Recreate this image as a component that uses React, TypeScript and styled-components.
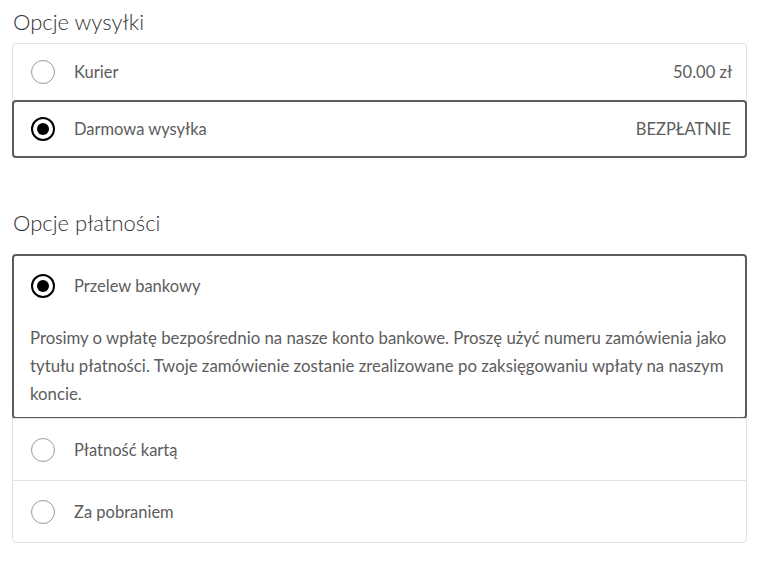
import React, { useState } from "react";
import styled, { createGlobalStyle } from "styled-components";

const GlobalStyle = createGlobalStyle`
  body {
    margin: 0;
    background: #fff;
    font-family: Lato, "Liberation Sans", sans-serif;
  }
`;

type Option = {
  id: string;
  label: string;
  price?: string;
  description?: string;
};

const shipping: Option[] = [
  { id: "kurier", label: "Kurier", price: "50.00 zł" },
  { id: "free", label: "Darmowa wysyłka", price: "BEZPŁATNIE" },
];

const payment: Option[] = [
  {
    id: "bank",
    label: "Przelew bankowy",
    description:
      "Prosimy o wpłatę bezpośrednio na nasze konto bankowe. Proszę użyć numeru zamówienia jako tytułu płatności. Twoje zamówienie zostanie zrealizowane po zaksięgowaniu wpłaty na naszym koncie.",
  },
  { id: "card", label: "Płatność kartą" },
  { id: "cod", label: "Za pobraniem" },
];

function OptionGroup({
  options,
  value,
  onChange, // id -> void
  rowHeight,
  selectedRowHeight,
}: {
  options: Option[];
  value: string;
  onChange: (id: string) => void;
  rowHeight: number;
  selectedRowHeight: number;
}) {
  return (
    <Box>
      {options.map((opt, index) => {
        const selected = opt.id === value;
        return (
          <Item key={opt.id} $selected={selected} $first={index === 0}>
            <Row
              $height={selected ? selectedRowHeight : rowHeight}
              onClick={() => onChange(opt.id)}
            >
              <Radio $checked={selected} />
              <Label>{opt.label}</Label>
              {opt.price && <Price>{opt.price}</Price>}
            </Row>
            {selected && opt.description && (
              <Description>{opt.description}</Description>
            )}
          </Item>
        );
      })}
    </Box>
  );
}

export default function App() {
  const [ship, setShip] = useState("free");
  const [pay, setPay] = useState("bank");

  return (
    <>
      <GlobalStyle />
      <Page>
        <Heading>Opcje wysyłki</Heading>
        <OptionGroup
          options={shipping}
          value={ship}
          onChange={setShip}
          rowHeight={56}
          selectedRowHeight={54}
        />
        <Heading $spaced>Opcje płatności</Heading>
        <OptionGroup
          options={payment}
          value={pay}
          onChange={setPay}
          rowHeight={61}
          selectedRowHeight={60}
        />
      </Page>
    </>
  );
}

const Page = styled.div`
  width: 735px;
  padding: 6px 0 0 12px;
`;

const Heading = styled.h2<{ $spaced?: boolean }>`
  margin: ${(p) => (p.$spaced ? "49px 0 15px 1px" : "0 0 5px 1px")};
  font-size: 22px;
  font-weight: 300;
  line-height: 32px;
  color: #333;
`;

const Box = styled.div`
  border: 1px solid #e2e2e2;
  border-radius: 4px;
`;

const Item = styled.div<{ $selected: boolean; $first: boolean }>`
  border-top: ${(p) => (p.$first ? "none" : "1px solid #e2e2e2")};
  ${(p) =>
    p.$selected &&
    `
    border: 2px solid #5b5b5b;
    border-radius: 4px;
    margin: ${p.$first ? "-1px" : "0"} -1px -1px;
  `}
  padding-left: ${(p) => (p.$selected ? "16px" : "17px")};
  padding-right: 14px;
`;

const Row = styled.label<{ $height: number }>`
  display: flex;
  align-items: center;
  height: ${(p) => p.$height}px;
  cursor: pointer;
`;

const Radio = styled.span<{ $checked: boolean }>`
  width: 24px;
  height: 24px;
  box-sizing: border-box;
  border-radius: 50%;
  border: ${(p) => (p.$checked ? "2px solid #000" : "1px solid #9a9a9a")};
  display: flex;
  align-items: center;
  justify-content: center;
  flex-shrink: 0;
  margin-left: 1px;

  &::after {
    content: "";
    display: ${(p) => (p.$checked ? "block" : "none")};
    width: 12px;
    height: 12px;
    border-radius: 50%;
    background: #000;
  }
`;

const Label = styled.span`
  margin-left: 19px;
  font-size: 16.5px;
  color: #5c5c5c;
  flex: 1;
`;

const Price = styled.span`
  font-size: 16.5px;
  color: #5c5c5c;
`;

const Description = styled.p`
  margin: 8px 0 9px;
  font-size: 16.8px;
  line-height: 28px;
  color: #5c5c5c;
`;
